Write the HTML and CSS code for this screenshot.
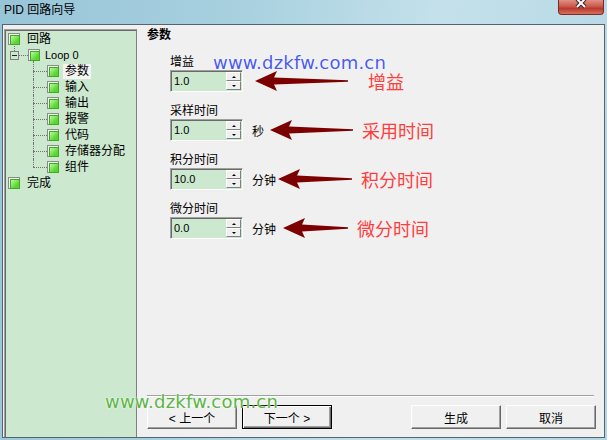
FILE: index.html
```html
<!DOCTYPE html>
<html lang="zh-CN">
<head>
  <meta charset="UTF-8">
  <title>PID 回路向导</title>
  <link rel="stylesheet" href="styles.css">
</head>
<body>
  <div class="window">
    <div class="titlebar">
      <span class="title">PID 回路向导</span>
      <div class="close-btn">
        <svg width="44" height="14" viewBox="0 0 44 14">
          <path d="M18 -1 L26 7 M26 -1 L18 7" stroke="#3b2626" stroke-width="4" fill="none"/>
          <path d="M18 -1 L26 7 M26 -1 L18 7" stroke="#ffffff" stroke-width="2" fill="none"/>
        </svg>
      </div>
    </div>

    <div class="frame">
      <!-- 左侧树 -->
      <div class="tree">
        <ul class="tree-list">
          <li>
            <div class="node-row root-row">
              <span class="chk"></span><span class="node-text">回路</span>
            </div>
          </li>
          <li>
            <div class="node-row loop-row">
              <span class="expander"></span><span class="branch branch-short"></span><span class="chk"></span><span class="node-text loop-text">Loop 0</span>
            </div>
            <ul class="leaves">
              <li class="node-row"><span class="branch"></span><span class="chk"></span><span class="node-text leaf-text selected">参数</span></li>
              <li class="node-row"><span class="branch"></span><span class="chk"></span><span class="node-text leaf-text">输入</span></li>
              <li class="node-row"><span class="branch"></span><span class="chk"></span><span class="node-text leaf-text">输出</span></li>
              <li class="node-row"><span class="branch"></span><span class="chk"></span><span class="node-text leaf-text">报警</span></li>
              <li class="node-row"><span class="branch"></span><span class="chk"></span><span class="node-text leaf-text">代码</span></li>
              <li class="node-row"><span class="branch"></span><span class="chk"></span><span class="node-text leaf-text">存储器分配</span></li>
              <li class="node-row"><span class="branch"></span><span class="chk"></span><span class="node-text leaf-text">组件</span></li>
            </ul>
          </li>
          <li>
            <div class="node-row root-row">
              <span class="chk"></span><span class="node-text">完成</span>
            </div>
          </li>
        </ul>
      </div>

      <!-- 右侧参数页 -->
      <div class="page">
        <h3 class="page-title">参数</h3>

        <div class="fields">
          <div class="field">
            <label class="field-label">增益</label>
            <div class="field-row">
              <div class="spin">
                <span class="spin-value">1.0</span>
                <span class="spin-btns"><span class="spin-up"></span><span class="spin-down"></span></span>
              </div>
              <svg class="arrow arrow-1" width="93" height="20" viewBox="0 0 93 20"><path d="M0 10 L22 0 L19 6.5 L93 9.3 L93 10.7 L19 13.5 L22 20 Z"/></svg>
              <span class="note note-gain">增益</span>
            </div>
          </div>

          <div class="field">
            <label class="field-label">采样时间</label>
            <div class="field-row">
              <div class="spin">
                <span class="spin-value">1.0</span>
                <span class="spin-btns"><span class="spin-up"></span><span class="spin-down"></span></span>
              </div>
              <span class="unit">秒</span>
              <svg class="arrow arrow-2" width="83" height="20" viewBox="0 0 83 20"><path d="M0 10 L22 0 L19 6.5 L83 9.3 L83 10.7 L19 13.5 L22 20 Z"/></svg>
              <span class="note">采用时间</span>
            </div>
          </div>

          <div class="field">
            <label class="field-label">积分时间</label>
            <div class="field-row">
              <div class="spin">
                <span class="spin-value">10.0</span>
                <span class="spin-btns"><span class="spin-up"></span><span class="spin-down"></span></span>
              </div>
              <span class="unit">分钟</span>
              <svg class="arrow arrow-3" width="74" height="20" viewBox="0 0 74 20"><path d="M0 10 L22 0 L19 6.5 L74 9.3 L74 10.7 L19 13.5 L22 20 Z"/></svg>
              <span class="note">积分时间</span>
            </div>
          </div>

          <div class="field">
            <label class="field-label">微分时间</label>
            <div class="field-row">
              <div class="spin">
                <span class="spin-value">0.0</span>
                <span class="spin-btns"><span class="spin-up"></span><span class="spin-down"></span></span>
              </div>
              <span class="unit">分钟</span>
              <svg class="arrow arrow-4" width="65" height="20" viewBox="0 0 65 20"><path d="M0 10 L22 0 L19 6.5 L65 9.3 L65 10.7 L19 13.5 L22 20 Z"/></svg>
              <span class="note">微分时间</span>
            </div>
          </div>
        </div>

        <div class="footer">
          <div class="btn-group">
            <button class="btn">&lt; 上一个</button>
            <button class="btn btn-default">下一个 &gt;</button>
          </div>
          <div class="btn-group btn-group-right">
            <button class="btn">生成</button>
            <button class="btn">取消</button>
          </div>
        </div>
      </div>
    </div>

    <div class="watermark wm-blue">www.dzkfw.com.cn</div>
    <div class="watermark wm-green">www.dzkfw.com.cn</div>
  </div>
</body>
</html>
```

FILE: styles.css
```css
* {
  box-sizing: border-box;
}

body {
  margin: 0;
  font-family: "Liberation Sans", "Noto Sans CJK SC", sans-serif;
  font-size: 12px;
  color: #000;
}

.window {
  position: relative;
  width: 607px;
  height: 440px;
  overflow: hidden;
  background: linear-gradient(100deg, #97c5d8 0%, #a8d0df 35%, #c4e1eb 65%, #b3d6e3 100%);
}

/* 标题栏 */
.titlebar {
  height: 24px;
  display: flex;
  justify-content: space-between;
  align-items: flex-start;
}

.title {
  padding: 3px 0 0 4px;
  line-height: 15px;
}

.close-btn {
  width: 46px;
  height: 15px;
  margin-right: 3px;
  border: 1px solid #7a2b24;
  border-top: none;
  border-radius: 0 0 4px 4px;
  background: linear-gradient(#df9085, #cb5a4d 45%, #b9392d 60%, #d6705e);
}

.close-btn svg {
  display: block;
}

.frame {
  display: flex;
  height: 414px;
  margin: 0 2px;
  border: 1px solid #56656d;
  background: #f0f0f0;
}

/* 树 */
.tree {
  width: 133px;
  margin: 4px 0 0 1px;
  padding-top: 1px;
  background: #cce8cf;
  border-top: 1px solid #a0a0a0;
  border-left: 1px solid #a0a0a0;
  border-right: 1px solid #808080;
  box-shadow: inset 1px 1px #696969;
}

.tree-list,
.leaves {
  list-style: none;
  margin: 0;
  padding: 0;
}

.node-row {
  display: flex;
  align-items: center;
  height: 16px;
}

.root-row {
  padding-left: 3px;
}

.root-row .node-text {
  margin-left: 7px;
}

.loop-row {
  padding-left: 5px;
}

.chk {
  width: 12px;
  height: 12px;
  padding: 1px;
  border: 1px solid #8a8a8a;
  background: #eefaea;
  flex: none;
}

.chk::after {
  content: "";
  display: block;
  width: 8px;
  height: 8px;
  border: 1px solid #46a52c;
  background: linear-gradient(135deg, #c2f7a6, #56d830 70%);
}

.expander {
  position: relative;
  width: 9px;
  height: 9px;
  border: 1px solid #808080;
  flex: none;
}

.expander::before {
  content: "";
  position: absolute;
  left: 3px;
  top: -6px;
  height: 5px;
  border-left: 1px dotted #707070;
}

.expander::after {
  content: "";
  position: absolute;
  left: 1px;
  top: 3px;
  width: 5px;
  height: 1px;
  background: #222;
}

.branch {
  width: 14px;
  height: 0;
  border-top: 1px dotted #707070;
  flex: none;
}

.branch-short {
  width: 9px;
}

.node-text {
  line-height: 15px;
  white-space: nowrap;
}

.loop-text {
  margin-left: 5px;
  font-size: 11px;
}

.leaves {
  margin-left: 28px;
}

.leaves li {
  position: relative;
}

.leaves li::before {
  content: "";
  position: absolute;
  left: 0;
  top: 0;
  bottom: 0;
  border-left: 1px dotted #707070;
}

.leaves li:first-child::before {
  top: -2px;
}

.leaves li:last-child::before {
  bottom: 8px;
}

.leaf-text {
  margin-left: 4px;
  padding: 0 2px;
}

.leaf-text.selected {
  background: #f4f4f4;
}

/* 参数页 */
.page {
  flex: 1;
  display: flex;
  flex-direction: column;
  padding: 2px 10px 8px 10px;
}

.page-title {
  margin: 0;
  font-size: 12px;
  font-weight: bold;
  line-height: 16px;
}

.fields {
  display: flex;
  flex-direction: column;
  gap: 12px;
  margin: 12px 0 0 23px;
}

.field-label {
  display: block;
  line-height: 15px;
}

.field-row {
  display: flex;
  align-items: center;
  height: 22px;
}

.spin {
  display: flex;
  width: 73px;
  height: 22px;
  background: #cce8cf;
  border: 1px solid;
  border-color: #a0a0a0 #ffffff #ffffff #a0a0a0;
  box-shadow: inset 1px 1px #696969;
}

.spin-value {
  flex: 1;
  padding: 1px 0 0 3px;
  font-size: 11px;
  line-height: 18px;
}

.spin-btns {
  display: flex;
  flex-direction: column;
  width: 15px;
  margin: 1px 1px 1px 0;
  background: #f0f0f0;
}

.spin-up,
.spin-down {
  position: relative;
  flex: 1;
  border: 1px solid;
  border-color: #ffffff #808080 #808080 #ffffff;
}

.spin-up::after,
.spin-down::after {
  content: "";
  position: absolute;
  left: 5px;
  top: 3px;
  border-left: 2px solid transparent;
  border-right: 2px solid transparent;
}

.spin-up::after {
  border-bottom: 2px solid #000;
}

.spin-down::after {
  border-top: 2px solid #000;
}

.unit {
  margin-left: 9px;
}

.arrow {
  flex: none;
  fill: #7c0000;
}

.arrow-1 {
  margin-left: 12px;
}

.arrow-2 {
  margin-left: 6px;
}

.arrow-3 {
  margin-left: 2px;
}

.arrow-4 {
  margin-left: 7px;
}

.note {
  margin-left: 9px;
  font-family: "Noto Sans CJK SC", sans-serif;
  font-size: 18px;
  line-height: 22px;
  color: #ff3d3d;
  white-space: nowrap;
}

.note-gain {
  margin-left: 20px;
}

/* 底部按钮 */
.footer {
  display: flex;
  justify-content: space-between;
  margin-top: auto;
  padding-top: 9px;
  border-top: 1px solid #a0a0a0;
  box-shadow: inset 0 1px #ffffff;
}

.btn-group {
  display: flex;
  gap: 5px;
}

.btn-group-right {
  margin-right: -2px;
}

.btn {
  width: 90px;
  height: 24px;
  padding: 0;
  font-family: inherit;
  font-size: 12px;
  color: #000;
  background: #f0f0f0;
  border: 1px solid;
  border-color: #ffffff #696969 #696969 #ffffff;
  box-shadow: inset -1px -1px #a0a0a0;
}

.btn-default {
  border-color: #000;
  box-shadow: inset 1px 1px #ffffff, inset -1px -1px #696969, inset -2px -2px #a0a0a0;
}

/* 水印 */
.watermark {
  position: absolute;
  font-family: "DejaVu Sans", sans-serif;
  font-size: 18px;
  line-height: 22px;
  letter-spacing: 0.2px;
  white-space: nowrap;
  text-shadow: 0 0 2px #ffffff, 0 0 1px #ffffff;
}

.wm-blue {
  left: 213px;
  top: 52px;
  color: #4a5af4;
}

.wm-green {
  left: 105px;
  top: 391px;
  color: #5cb545;
}
```
